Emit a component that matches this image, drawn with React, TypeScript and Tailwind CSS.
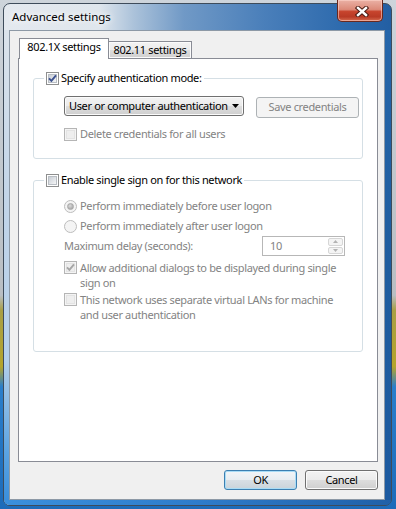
import React from "react";

const gray = "text-[#838383]";
const btnFace =
  "bg-[linear-gradient(180deg,#f3f3f3_0%,#ebebeb_50%,#dddddd_51%,#cfcfcf_100%)] shadow-[inset_0_0_0_1px_#fbfbfb]";

function Check({ checked = false, disabled = false }: { checked?: boolean; disabled?: boolean }) {
  return (
    <span
      className={`relative flex h-[13px] w-[13px] shrink-0 items-center justify-center border ${
        disabled ? "border-[#b5b5b5] bg-[#f4f4f4]" : "border-[#8e8f8f] bg-white"
      }`}
    >
      <span
        className={`h-[9px] w-[9px] border ${
          disabled
            ? "border-[#e3e3e3] bg-[#eeeeee]"
            : "border-[#b9bec4] bg-[linear-gradient(135deg,#c9ced5,#f5f6f7)]"
        }`}
      />
      {checked && (
        <svg className="absolute left-0 top-0" width="11" height="11" viewBox="0 0 11 11">
          <path
            d="M2 5.4 L4.4 7.9 L9 2.3"
            fill="none"
            stroke={disabled ? "#a6a6a6" : "#3d528f"}
            strokeWidth="1.9"
          />
        </svg>
      )}
    </span>
  );
}

function Radio({ checked = false }: { checked?: boolean }) {
  return (
    <span className="flex h-[13px] w-[13px] shrink-0 items-center justify-center rounded-full border border-[#bdbdbd] bg-[#f4f4f4]">
      {checked && (
        <span className="h-[7px] w-[7px] rounded-full border border-[#a8a8a8] bg-[radial-gradient(circle_at_40%_35%,#dadada,#9a9a9a)]" />
      )}
    </span>
  );
}

function Row({ children }: { children: React.ReactNode }) {
  return <div className="flex h-[14px] items-center gap-[3px] leading-[14px]">{children}</div>;
}

export default function App() {
  return (
    <div className="flex h-[509px] w-[396px] bg-[linear-gradient(180deg,#cdd4db_0%,#b9bec3_58%,#a99f45_61%,#b5a42b_72%,#2a7ecb_76%,#1d6bb9_100%)] pb-[3px] pl-[3px] pr-[4px] pt-[3px] font-['Noto_Sans',sans-serif]">
      <div className="flex flex-1 flex-col rounded-[7px] border border-[#3e4c5b] bg-[linear-gradient(90deg,#e4e9ef_0px,#dfe6ed_95px,#abc2da_130px,#7099c6_180px,#4a7fba_260px,#2d6aad_340px,#225ea2_390px)]">
        {/* caption */}
        <div className="flex h-[27px] items-start">
          <span className="ml-[8px] mt-[6px] text-[11.5px] leading-[14px] text-black [text-shadow:0_0_6px_#fff,0_0_10px_#fff]">
            Advanced settings
          </span>
          <button className="ml-auto mr-[8px] -mt-[4px] flex h-[22px] w-[46px] items-center justify-center rounded-b-[5px] border border-t-0 border-[#6a281e] bg-[linear-gradient(180deg,#eab1a5_0%,#dc8a79_45%,#c7442d_55%,#b93a25_80%,#d66c51_100%)] shadow-[inset_0_0_0_1px_rgba(255,215,205,0.55)]">
            <svg width="14" height="11" viewBox="0 0 14 11" className="ml-[3px] mt-[1px]">
              <path d="M3 2 L11 9 M11 2 L3 9" stroke="#4a1b13" strokeWidth="4.4" strokeLinecap="square" />
              <path d="M3 2 L11 9 M11 2 L3 9" stroke="#ffffff" strokeWidth="2.4" strokeLinecap="square" />
            </svg>
          </button>
        </div>

        <div className="flex flex-1">
          <div className="w-[5px] bg-[linear-gradient(180deg,#dbe3eb_0%,#c3d5e8_35%,#b4cfea_70%,#5aa3e2_90%,#3b8fdc_100%)]" />

          {/* client area */}
          <div className="flex w-[376px] flex-col border border-[#8d99a6] bg-[#f0f0f0] pl-[8px] pr-[6px] text-[11px] tracking-[-0.35px] text-black">
            {/* tabs */}
            <div className="relative z-10 mt-[7px] flex h-[20px] items-start pl-[1px]">
              <div className="flex h-[21px] w-[90px] items-center justify-center border border-b-0 border-[#898c95] bg-white pb-[3px]">
                802.1X settings
              </div>
              <div
                className={`mt-[3px] flex h-[17px] w-[83px] items-center justify-center border border-b-0 border-l-0 border-[#898c95] pt-[1px] ${btnFace}`}
              >
                802.11 settings
              </div>
            </div>

            {/* tab page */}
            <div className="flex h-[404px] flex-col border border-[#898c95] bg-white px-[14px]">
              <fieldset className="mt-[12px] rounded-[3px] border border-[#d5dfe5]">
                <legend className="ml-[10px] px-[2px]">
                  <span className="flex h-[14px] items-center gap-[2px] leading-[14px]">
                    <Check checked />
                    Specify authentication mode:
                  </span>
                </legend>
                <div className="pb-[17px] pl-[30px] pt-[11px]">
                  <div className="flex items-start">
                    <div
                      className={`flex h-[20px] w-[180px] items-center justify-between rounded-[3px] border border-[#707070] pl-[4px] pr-[4px] ${btnFace}`}
                    >
                      <span>User or computer authentication</span>
                      <svg width="7" height="4" viewBox="0 0 7 4">
                        <path d="M0 0 H7 L3.5 4 Z" fill="#000" />
                      </svg>
                    </div>
                    <div
                      className={`ml-[12px] mt-[1px] flex h-[21px] w-[103px] items-center justify-center rounded-[3px] border border-[#adb2b5] bg-[#f4f4f4] ${gray}`}
                    >
                      Save credentials
                    </div>
                  </div>
                  <div className="mt-[9px]">
                    <Row>
                      <Check disabled />
                      <span className={gray}>Delete credentials for all users</span>
                    </Row>
                  </div>
                </div>
              </fieldset>

              <fieldset className="mt-[14px] rounded-[3px] border border-[#d5dfe5]">
                <legend className="ml-[10px] px-[2px]">
                  <span className="flex h-[14px] items-center gap-[2px] leading-[14px]">
                    <Check />
                    Enable single sign on for this network
                  </span>
                </legend>
                <div className="pb-[29px] pl-[30px] pt-[12px]">
                  <Row>
                    <Radio checked />
                    <span className={gray}>Perform immediately before user logon</span>
                  </Row>
                  <div className="mt-[6px]">
                    <Row>
                      <Radio />
                      <span className={gray}>Perform immediately after user logon</span>
                    </Row>
                  </div>
                  <div className="mt-[3px] flex items-center">
                    <span className={`w-[198px] ${gray}`}>Maximum delay (seconds):</span>
                    <div className="flex h-[20px] w-[83px] items-stretch border border-[#b7b7b7] bg-white">
                      <span className={`flex flex-1 items-center pl-[7px] ${gray}`}>10</span>
                      <div className="my-[1px] mr-[1px] flex w-[15px] flex-col gap-px">
                        <span className="flex flex-1 items-center justify-center rounded-[2px] border border-[#d6d6d6] bg-[#f4f4f4]">
                          <svg width="5" height="3" viewBox="0 0 5 3">
                            <path d="M0 3 L2.5 0 L5 3 Z" fill="#b3b3b3" />
                          </svg>
                        </span>
                        <span className="flex flex-1 items-center justify-center rounded-[2px] border border-[#d6d6d6] bg-[#f4f4f4]">
                          <svg width="5" height="3" viewBox="0 0 5 3">
                            <path d="M0 0 L5 0 L2.5 3 Z" fill="#b3b3b3" />
                          </svg>
                        </span>
                      </div>
                    </div>
                  </div>
                  <div className="mt-[4px] flex items-start gap-[3px] leading-[15px]">
                    <span className="mt-[1px]">
                      <Check checked disabled />
                    </span>
                    <span className={gray}>
                      Allow additional dialogs to be displayed during single
                      <br />
                      sign on
                    </span>
                  </div>
                  <div className="mt-[2px] flex items-start gap-[3px] leading-[15px]">
                    <span className="mt-[1px]">
                      <Check disabled />
                    </span>
                    <span className={gray}>
                      This network uses separate virtual LANs for machine
                      <br />
                      and user authentication
                    </span>
                  </div>
                </div>
              </fieldset>
            </div>

            {/* dialog buttons */}
            <div className="mb-[9px] mt-[8px] flex h-[20px] justify-end gap-[8px]">
              <button className="flex w-[73px] items-center justify-center rounded-[3px] border border-[#3c7fb1] bg-[linear-gradient(180deg,#f2f5f8_0%,#e8edf1_50%,#d8dfe5_51%,#cad3da_100%)] shadow-[inset_0_0_0_1px_#a9dcf6]">
                OK
              </button>
              <button className={`flex w-[73px] items-center justify-center rounded-[3px] border border-[#707070] ${btnFace}`}>
                Cancel
              </button>
            </div>
          </div>

          <div className="flex-1 bg-[linear-gradient(180deg,#2566aa_0%,#1f5d9f_50%,#1c5aa0_100%)]" />
        </div>

        <div className="h-[5px] rounded-b-[6px] bg-[linear-gradient(90deg,#3b90dd_0%,#2e7ccb_50%,#2060a8_100%)]" />
      </div>
    </div>
  );
}
